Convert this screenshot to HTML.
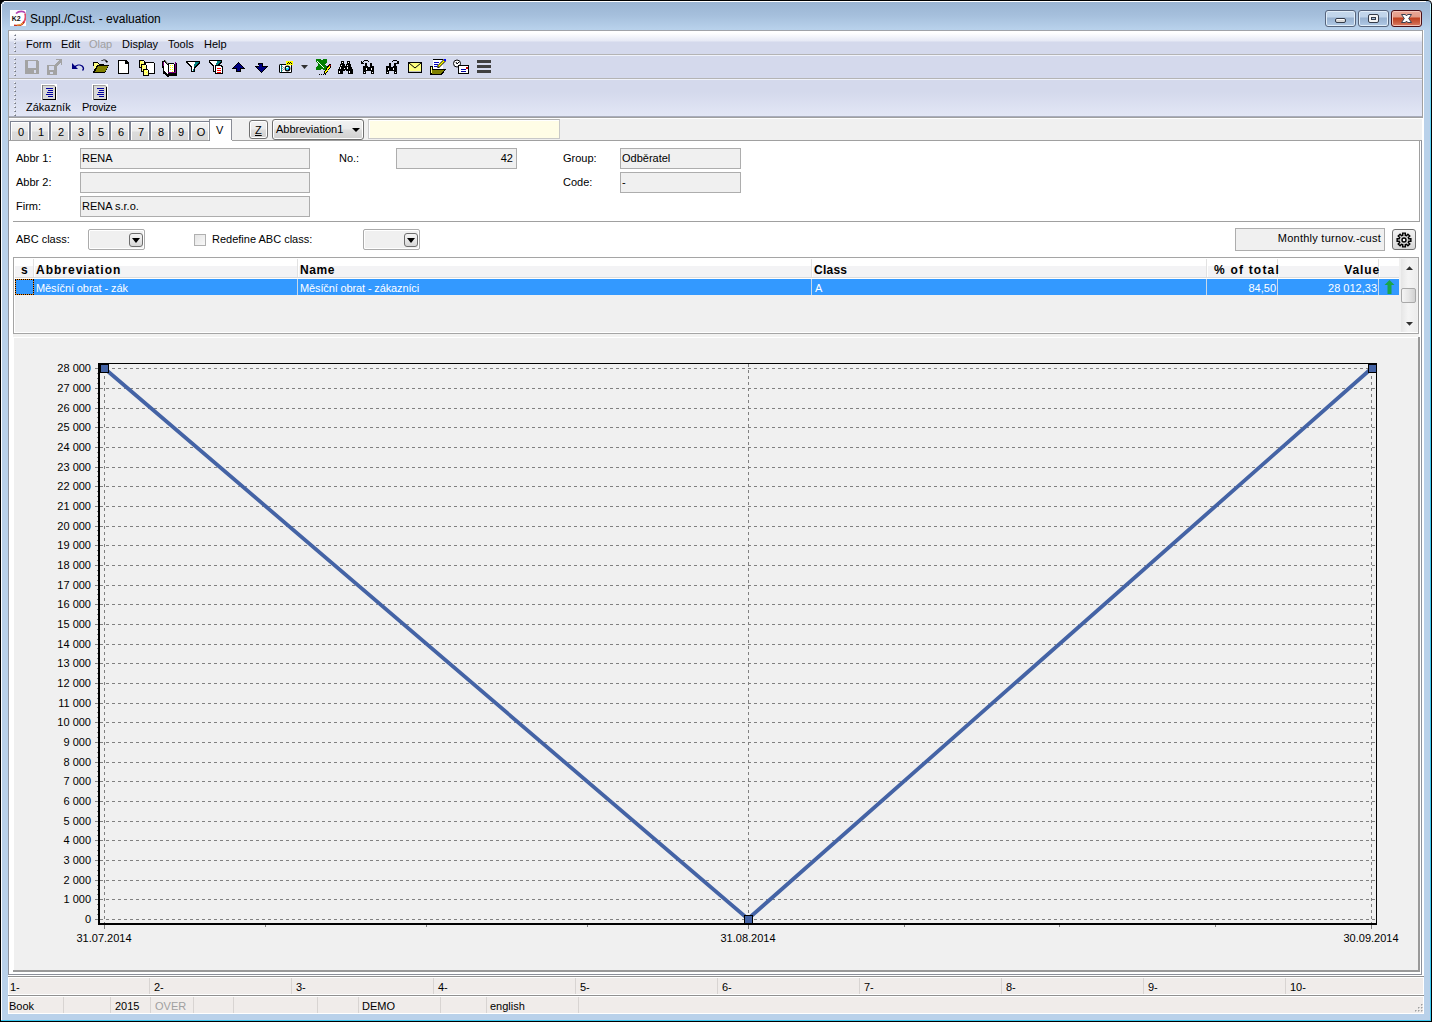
<!DOCTYPE html>
<html><head><meta charset="utf-8">
<style>
*{box-sizing:border-box;margin:0;padding:0}
html,body{width:1432px;height:1022px;overflow:hidden}
body{position:relative;background:#000;font-family:"Liberation Sans",sans-serif;font-size:11px;color:#000;line-height:13px}
.a{position:absolute}
.t{position:absolute;white-space:nowrap;line-height:13px}
</style></head><body>

<!-- window frame -->
<div class="a" style="left:1424px;top:0;width:8px;height:6px;background:#fff"></div>
<div class="a" style="left:0;top:0;width:1432px;height:1022px;border:1px solid #000;border-top-left-radius:6px;border-top-right-radius:4px;background:linear-gradient(#9ab4d2 0,#a5bfdc 14px,#b9d2ec 29px,#b9d1ea 30px)"></div>
<div class="a" style="left:1430px;top:4px;width:1px;height:1017px;background:linear-gradient(#c8f4ff,#90e0f8 20px,#3cc8f0 200px)"></div>
<div class="a" style="left:1px;top:1020px;width:1430px;height:1px;background:#3cc8f0"></div>
<div class="a" style="left:4px;top:1px;width:1422px;height:1px;background:#fff"></div><div class="a" style="left:2px;top:2px;width:2px;height:2px;background:#e8f0f8;border-radius:2px 0 0 0"></div>
<div class="a" style="left:1px;top:4px;width:1px;height:1016px;background:#fcfdff"></div>

<!-- title -->
<div class="t" style="left:30px;top:11px;font-size:12px;line-height:16px;color:#000">Suppl./Cust. - evaluation</div>

<!-- client area -->
<div id="client" class="a" style="left:8px;top:30px;width:1415px;height:984px;background:#f0f0f0;border-left:1px solid #a0a0a0;border-top:1px solid #a0a0a0"></div>

<!-- menubar -->
<div class="a" style="left:9px;top:31px;width:1413px;height:23px;background:linear-gradient(#fff 0,#fff 2px,#e6e9f5 10px,#d4d9ec 11px,#d4d9ec)"></div>
<div class="a" style="left:9px;top:54px;width:1413px;height:1px;background:#b4b4b4"></div>
<div class="a" style="left:8px;top:30px;width:1415px;height:1px;background:#a0a3a8"></div>
<div class="a" style="left:1422px;top:30px;width:1px;height:88px;background:#a0a0a0"></div>
<div class="a" style="left:1423px;top:30px;width:1px;height:984px;background:#fff"></div>
<div class="a" style="left:1422px;top:118px;width:1px;height:896px;background:#fff"></div>

<!-- toolbar 1 -->
<div class="a" style="left:9px;top:55px;width:1413px;height:1px;background:#f0f3fb"></div>
<div class="a" style="left:9px;top:56px;width:1413px;height:22px;background:#d4d9ec"></div>
<div class="a" style="left:9px;top:78px;width:1413px;height:1px;background:#b4b4b4"></div>

<!-- toolbar 2 -->
<div class="a" style="left:9px;top:79px;width:1413px;height:1px;background:#f0f3fb"></div>
<div class="a" style="left:9px;top:80px;width:1413px;height:36px;background:linear-gradient(#d4d9ec 0,#d4d9ec 12px,#e2e6f5 35px)"></div>
<div class="a" style="left:9px;top:116px;width:1413px;height:1px;background:#a8acbb"></div>
<div class="a" style="left:9px;top:117px;width:1413px;height:1px;background:#a0a0a0"></div>
<div class="a" style="left:9px;top:118px;width:1413px;height:1px;background:#fff"></div>


<!-- toolbar icons -->
<svg class="a" style="left:0;top:0" width="520" height="120" viewBox="0 0 520 120" shape-rendering="crispEdges">
<!-- grips -->
<g><rect x="14" y="34" width="1" height="1" fill="#fff"/><rect x="15" y="34" width="1" height="1" fill="#b8bcc8"/><rect x="14" y="35" width="1" height="1" fill="#a0a4b0"/><rect x="15" y="35" width="1" height="1" fill="#70747e"/><rect x="14" y="38" width="1" height="1" fill="#fff"/><rect x="15" y="38" width="1" height="1" fill="#b8bcc8"/><rect x="14" y="39" width="1" height="1" fill="#a0a4b0"/><rect x="15" y="39" width="1" height="1" fill="#70747e"/><rect x="14" y="42" width="1" height="1" fill="#fff"/><rect x="15" y="42" width="1" height="1" fill="#b8bcc8"/><rect x="14" y="43" width="1" height="1" fill="#a0a4b0"/><rect x="15" y="43" width="1" height="1" fill="#70747e"/><rect x="14" y="46" width="1" height="1" fill="#fff"/><rect x="15" y="46" width="1" height="1" fill="#b8bcc8"/><rect x="14" y="47" width="1" height="1" fill="#a0a4b0"/><rect x="15" y="47" width="1" height="1" fill="#70747e"/><rect x="14" y="50" width="1" height="1" fill="#fff"/><rect x="15" y="50" width="1" height="1" fill="#b8bcc8"/><rect x="14" y="51" width="1" height="1" fill="#a0a4b0"/><rect x="15" y="51" width="1" height="1" fill="#70747e"/><rect x="14" y="58" width="1" height="1" fill="#fff"/><rect x="15" y="58" width="1" height="1" fill="#b8bcc8"/><rect x="14" y="59" width="1" height="1" fill="#a0a4b0"/><rect x="15" y="59" width="1" height="1" fill="#70747e"/><rect x="14" y="62" width="1" height="1" fill="#fff"/><rect x="15" y="62" width="1" height="1" fill="#b8bcc8"/><rect x="14" y="63" width="1" height="1" fill="#a0a4b0"/><rect x="15" y="63" width="1" height="1" fill="#70747e"/><rect x="14" y="66" width="1" height="1" fill="#fff"/><rect x="15" y="66" width="1" height="1" fill="#b8bcc8"/><rect x="14" y="67" width="1" height="1" fill="#a0a4b0"/><rect x="15" y="67" width="1" height="1" fill="#70747e"/><rect x="14" y="70" width="1" height="1" fill="#fff"/><rect x="15" y="70" width="1" height="1" fill="#b8bcc8"/><rect x="14" y="71" width="1" height="1" fill="#a0a4b0"/><rect x="15" y="71" width="1" height="1" fill="#70747e"/><rect x="14" y="74" width="1" height="1" fill="#fff"/><rect x="15" y="74" width="1" height="1" fill="#b8bcc8"/><rect x="14" y="75" width="1" height="1" fill="#a0a4b0"/><rect x="15" y="75" width="1" height="1" fill="#70747e"/><rect x="14" y="82" width="1" height="1" fill="#fff"/><rect x="15" y="82" width="1" height="1" fill="#b8bcc8"/><rect x="14" y="83" width="1" height="1" fill="#a0a4b0"/><rect x="15" y="83" width="1" height="1" fill="#70747e"/><rect x="14" y="86" width="1" height="1" fill="#fff"/><rect x="15" y="86" width="1" height="1" fill="#b8bcc8"/><rect x="14" y="87" width="1" height="1" fill="#a0a4b0"/><rect x="15" y="87" width="1" height="1" fill="#70747e"/><rect x="14" y="90" width="1" height="1" fill="#fff"/><rect x="15" y="90" width="1" height="1" fill="#b8bcc8"/><rect x="14" y="91" width="1" height="1" fill="#a0a4b0"/><rect x="15" y="91" width="1" height="1" fill="#70747e"/><rect x="14" y="94" width="1" height="1" fill="#fff"/><rect x="15" y="94" width="1" height="1" fill="#b8bcc8"/><rect x="14" y="95" width="1" height="1" fill="#a0a4b0"/><rect x="15" y="95" width="1" height="1" fill="#70747e"/><rect x="14" y="98" width="1" height="1" fill="#fff"/><rect x="15" y="98" width="1" height="1" fill="#b8bcc8"/><rect x="14" y="99" width="1" height="1" fill="#a0a4b0"/><rect x="15" y="99" width="1" height="1" fill="#70747e"/><rect x="14" y="102" width="1" height="1" fill="#fff"/><rect x="15" y="102" width="1" height="1" fill="#b8bcc8"/><rect x="14" y="103" width="1" height="1" fill="#a0a4b0"/><rect x="15" y="103" width="1" height="1" fill="#70747e"/><rect x="14" y="106" width="1" height="1" fill="#fff"/><rect x="15" y="106" width="1" height="1" fill="#b8bcc8"/><rect x="14" y="107" width="1" height="1" fill="#a0a4b0"/><rect x="15" y="107" width="1" height="1" fill="#70747e"/><rect x="14" y="110" width="1" height="1" fill="#fff"/><rect x="15" y="110" width="1" height="1" fill="#b8bcc8"/><rect x="14" y="111" width="1" height="1" fill="#a0a4b0"/><rect x="15" y="111" width="1" height="1" fill="#70747e"/><rect x="14" y="114" width="1" height="1" fill="#fff"/><rect x="15" y="114" width="1" height="1" fill="#b8bcc8"/><rect x="14" y="115" width="1" height="1" fill="#a0a4b0"/><rect x="15" y="115" width="1" height="1" fill="#70747e"/></g>
<!-- save (disabled) -->
<path d="M25 60h13v1h1v13h-14z" fill="#a3a3a3"/>
<rect x="28" y="61" width="8" height="7" fill="#d4d9ec"/>
<rect x="34" y="70" width="2" height="3" fill="#d4d9ec"/>
<!-- save as (disabled) -->
<path d="M47 65h10v10h-10z" fill="#a3a3a3"/>
<rect x="49" y="66" width="5" height="4" fill="#d4d9ec"/>
<rect x="50" y="72" width="3" height="2" fill="#d4d9ec"/>
<path d="M56 59h6v6h-1v-3l-4 4h-2v-2l4-4h-3z" fill="#a3a3a3"/>
<!-- undo -->
<path d="M72 63v6h6l-2-2c1-2 5-2 6 0c1 1 1 2 0 3l1 1c2-2 1-4 0-5c-2-2-6-2-8 0z" fill="#000080" shape-rendering="auto"/>
<!-- open folder -->
<path d="M93 62h5l1 2h5v2h-11z" fill="#000"/>
<path d="M94 63h4l1 2h4v7h-9z" fill="#ffff80"/>
<path d="M93 72l4-7h12l-4 8h-12z" fill="#000"/>
<path d="M95 72l3-6h10l-3 6z" fill="#808000"/>
<path d="M101 61c2-2 5-2 6 0h1l-1 2l-2-2h1c-1-1-3-1-4 0z" fill="#000" shape-rendering="auto"/>
<!-- new -->
<path d="M118 60h8l3 3v11h-11z" fill="#000"/>
<path d="M119 61h6v3h3v9h-9z" fill="#fff"/>
<!-- copy -->
<path d="M145 62h8l2 2v10h-10z" fill="#000"/><path d="M146 63h7v1h1v9h-8z" fill="#fff"/><rect x="153" y="63" width="1" height="1" fill="#fff"/><path d="M139 60h4l2 2v6h-6z" fill="#000"/><path d="M140 61h3v1h1v5h-4z" fill="#ffff80"/><rect x="143" y="61" width="1" height="1" fill="#fff"/><path d="M141 64h4l2 2v6h-6z" fill="#000"/><path d="M142 65h3v1h1v5h-4z" fill="#ffff80"/><rect x="145" y="65" width="1" height="1" fill="#fff"/><path d="M143 69h4l2 2v5h-6z" fill="#000"/><path d="M144 70h3v1h1v4h-4z" fill="#ffff80"/><rect x="147" y="70" width="1" height="1" fill="#fff"/>
<g fill="#ffff00"><rect x="140" y="61" width="1" height="1"/><rect x="141" y="63" width="1" height="1"/><rect x="142" y="66" width="1" height="1"/><rect x="144" y="70" width="1" height="1"/><rect x="146" y="72" width="1" height="1"/></g>
<!-- book -->
<path d="M162 61h2v-1h1l3 4v-1h6v1h1v-1h2v13h-8v1h-2v-1h-1l-2-2h-1z" fill="#000"/>
<path d="M163 62h1v9l2 2h1v1h1v-1h8v-11h-1v10h-7l-1-1l-3-1z" fill="#800080"/>
<path d="M164 61l4 5v8l-4-3z" fill="#fff"/>
<path d="M165 60l3 4" stroke="#a0a0a0" fill="none" shape-rendering="auto"/>
<path d="M169 64h5v8h-5z" fill="#fff"/>
<g fill="#ffff00"><rect x="170" y="65" width="1" height="1"/><rect x="172" y="65" width="1" height="1"/><rect x="170" y="67" width="1" height="1"/><rect x="172" y="67" width="1" height="1"/><rect x="170" y="69" width="1" height="1"/><rect x="172" y="69" width="1" height="1"/><rect x="172" y="71" width="1" height="1"/></g>
<!-- filter -->
<path d="M186 61h14v2l-5 5v4h-4v-4l-5-5z" fill="#000"/>
<path d="M187 62h12l-5 5v4h-2v-4z" fill="#fff"/>
<path d="M195 62h4l-5 5v4h-1z" fill="#008080"/>
<!-- filter2 -->
<path d="M209 60h13v2l-5 5v5h-4v-5l-4-5z" fill="#000"/>
<path d="M210 61h11l-5 5v5h-2v-5z" fill="#fff"/>
<path d="M217 61h4l-5 5v5h-1z" fill="#008080"/>
<path d="M215 65h6l2 2v7h-8z" fill="#000"/><path d="M216 66h5v1h1v6h-6z" fill="#fff"/>
<rect x="217" y="68" width="4" height="1" fill="#f00"/><rect x="217" y="70" width="4" height="1" fill="#f00"/><rect x="217" y="72" width="4" height="1" fill="#f00"/>
<!-- up -->
<path d="M238 62l7 6v1h-4v3h-5v-3h-4v-1z" fill="#000"/><path d="M238 63l6 5h-4v3h-3v-3h-4z" fill="#000080"/>
<!-- down -->
<path d="M258 63h5v3h5v1l-7 6l-6-6v-1h4z" fill="#000"/><path d="M259 64h3v3h4l-5 5l-5-5h3z" fill="#000080"/>
<!-- camera -->
<rect x="279" y="64" width="13" height="9" rx="1.5" fill="#000" shape-rendering="auto"/>
<rect x="280" y="65" width="11" height="7" fill="#fff"/>
<rect x="281" y="65" width="1" height="7" fill="#008080"/>
<rect x="282" y="66" width="1" height="1" fill="#a0a0a0"/><rect x="283" y="67" width="1" height="1" fill="#a0a0a0"/><rect x="282" y="68" width="1" height="1" fill="#a0a0a0"/><rect x="283" y="69" width="1" height="1" fill="#a0a0a0"/><rect x="282" y="70" width="1" height="1" fill="#a0a0a0"/>
<circle cx="287.5" cy="68.5" r="2.3" fill="#20e0f0" stroke="#000" stroke-width="1.2" shape-rendering="auto"/>
<rect x="286" y="67" width="2" height="1" fill="#fff"/><rect x="288" y="69" width="1" height="1" fill="#0000ff"/>
<rect x="286" y="61" width="7" height="4" fill="#ffff00"/>
<rect x="288" y="62" width="1" height="1" fill="#000"/><rect x="290" y="62" width="1" height="1" fill="#000"/><rect x="289" y="63" width="1" height="1" fill="#000"/><rect x="287" y="63" width="1" height="1" fill="#000"/><rect x="291" y="63" width="1" height="1" fill="#000"/>
<!-- dropdown -->
<path d="M301 65h7l-3.5 4z" fill="#303030" shape-rendering="auto"/>
<!-- excel pencil -->
<path d="M316 59h4l1 1h1l1-1h4v3l-2 2v1l2 2v3h-4l-1-1h-1l-1 1h-4v-3l2-2v-1l-2-2z" fill="#008000"/>
<g fill="#fff"><rect x="317" y="61" width="1" height="1"/><rect x="318" y="62" width="1" height="1"/><rect x="319" y="63" width="1" height="1"/><rect x="320" y="64" width="1" height="1"/><rect x="321" y="65" width="1" height="1"/><rect x="322" y="66" width="1" height="1"/><rect x="323" y="67" width="1" height="1"/></g>
<path d="M329 64h2v3l-5 7l-1 1l-1-1v-2z" fill="#000"/>
<path d="M329 66h1v1l-4 6h-1v-1z" fill="#ffff00"/>
<rect x="329" y="65" width="2" height="1" fill="#c00000"/>
<rect x="319" y="74" width="1" height="1" fill="#000"/><rect x="321" y="74" width="1" height="1" fill="#000"/><rect x="323" y="74" width="1" height="1" fill="#000"/>
<!-- binoculars -->
<g fill="#000">
<rect x="341" y="61" width="3" height="3"/><rect x="347" y="61" width="3" height="3"/>
<rect x="340" y="64" width="5" height="3"/><rect x="346" y="64" width="5" height="3"/>
<rect x="339" y="67" width="6" height="4"/><rect x="346" y="67" width="6" height="4"/>
<rect x="338" y="69" width="5" height="5"/><rect x="348" y="69" width="5" height="5"/>
<rect x="344" y="66" width="3" height="4"/>
</g>
<g fill="#fff">
<rect x="342" y="62" width="1" height="1"/><rect x="348" y="62" width="1" height="1"/>
<rect x="341" y="65" width="1" height="1"/><rect x="347" y="65" width="1" height="1"/>
<rect x="340" y="67" width="1" height="2"/><rect x="347" y="67" width="1" height="2"/><rect x="344" y="68" width="1" height="1"/>
<rect x="339" y="71" width="1" height="2"/><rect x="349" y="71" width="1" height="2"/>
</g>
<g fill="#000">
<rect x="365" y="63" width="2" height="3"/><rect x="370" y="63" width="2" height="3"/>
<path d="M363 66h4l1 1h1l1-1h4v8h-3v-3h-5v3h-3z"/>
<path d="M364 60h4v1h-4zM363 61h1v1h-1zM368 61h1v1h-1zM361 61h1v1h1v1h1v1h-3z"/>
<rect x="389" y="63" width="2" height="3"/><rect x="394" y="63" width="2" height="3"/>
<path d="M386 66h4l1 1h1l1-1h4v8h-3v-3h-5v3h-3z"/>
<path d="M393 60h4v1h-4zM392 61h1v1h-1zM397 61h1v1h-1zM399 61v3h-3v-1h1v-1h1v-1z"/>
</g>
<g fill="#fff">
<rect x="366" y="68" width="1" height="2"/><rect x="371" y="68" width="1" height="2"/><rect x="364" y="72" width="1" height="1"/><rect x="372" y="72" width="1" height="1"/>
<rect x="388" y="68" width="1" height="2"/><rect x="393" y="68" width="1" height="2"/><rect x="387" y="72" width="1" height="1"/><rect x="395" y="72" width="1" height="1"/>
</g>
<!-- envelope -->
<path d="M408 62h14v11h-14z" fill="#000"/>
<rect x="409" y="63" width="12" height="8" fill="#ffff80"/>
<rect x="409" y="71" width="12" height="1" fill="#c0c0c0"/>
<path d="M409 63l6 5l6-5" stroke="#000" fill="none" shape-rendering="auto"/>
<!-- notepad -->
<path d="M433 60h10v9h-10z" fill="#fff"/><path d="M433 59h10v1h-10z" fill="#000"/>
<rect x="434" y="62" width="5" height="1" fill="#0000c0"/><rect x="434" y="64" width="4" height="1" fill="#0000c0"/><rect x="434" y="66" width="3" height="1" fill="#0000c0"/>
<path d="M444 59l2 2l-7 7l-2-0.5l0.5-2z" fill="#000" shape-rendering="auto"/><path d="M444 60l1 1l-6 6l-1-1z" fill="#ffff00" shape-rendering="auto"/>
<rect x="444" y="59" width="2" height="2" fill="#0000ff"/>
<path d="M430 66h3v3h10l3 0l-4 6h-12z" fill="#000"/>
<path d="M432 70h12l-3 4h-9z" fill="#808000"/><rect x="431" y="67" width="1" height="6" fill="#ffff80"/>
<!-- clock mail -->
<circle cx="457" cy="63.5" r="3.5" fill="#fff" stroke="#000" stroke-width="1" shape-rendering="auto"/>
<path d="M456 62l1 2l2-2" stroke="#000" fill="none" shape-rendering="auto"/>
<path d="M458 65h11v9h-11z" fill="#000"/><rect x="459" y="66" width="9" height="7" fill="#fff"/>
<rect x="466" y="67" width="2" height="2" fill="#c00000"/><rect x="461" y="69" width="5" height="1" fill="#0000a0"/><rect x="461" y="71" width="5" height="1" fill="#0000a0"/>
<!-- menu lines -->
<rect x="477" y="60" width="14" height="3" fill="#404040"/><rect x="477" y="65" width="14" height="3" fill="#404040"/><rect x="477" y="70" width="14" height="3" fill="#404040"/>
<!-- toolbar 2 doc icons -->
<g id="docic">
<rect x="41" y="84" width="16" height="16" fill="#fff"/>
<path d="M42 85h12l2 2v13h-14z" fill="#000"/><rect x="42" y="85" width="12" height="1" fill="#a0a0a0"/><path d="M54 85l2 2h-2z" fill="#c0c0c0"/>
<path d="M43 86h11v1h1v12h-12z" fill="#c8c8c8"/>
<path d="M43 86h11v1h1v12h-12z" fill="#e8e8e8" opacity="0.5"/>
<rect x="42" y="85" width="1" height="15" fill="#808080"/>
<rect x="46" y="88" width="7" height="1" fill="#0000a0"/><rect x="48" y="90" width="5" height="1" fill="#0000a0"/><rect x="47" y="92" width="6" height="1" fill="#0000a0"/><rect x="46" y="94" width="7" height="1" fill="#0000a0"/><rect x="48" y="96" width="5" height="1" fill="#0000a0"/>
</g>
<g transform="translate(51 0)">
<rect x="41" y="84" width="16" height="16" fill="#fff"/>
<path d="M42 85h12l2 2v13h-14z" fill="#000"/><rect x="42" y="85" width="12" height="1" fill="#a0a0a0"/><path d="M54 85l2 2h-2z" fill="#c0c0c0"/>
<path d="M43 86h11v1h1v12h-12z" fill="#c8c8c8"/>
<path d="M43 86h11v1h1v12h-12z" fill="#e8e8e8" opacity="0.5"/>
<rect x="42" y="85" width="1" height="15" fill="#808080"/>
<rect x="46" y="88" width="7" height="1" fill="#0000a0"/><rect x="48" y="90" width="5" height="1" fill="#0000a0"/><rect x="47" y="92" width="6" height="1" fill="#0000a0"/><rect x="46" y="94" width="7" height="1" fill="#0000a0"/><rect x="48" y="96" width="5" height="1" fill="#0000a0"/>
</g>
</svg>


<!-- caption buttons -->
<div class="a" style="left:1325px;top:10px;width:31px;height:17px;border:1px solid #56647c;border-radius:3px;background:linear-gradient(#c4d7ec 0,#c0d4ea 6px,#98b2d0 7px,#a3bcda 11px,#b2cbe6 15px);box-shadow:inset 0 0 0 1px #e2eef9"></div>
<div class="a" style="left:1335px;top:18px;width:11px;height:5px;border:1px solid #343c4a;border-radius:2px;background:linear-gradient(#fff,#fff 50%,#d8d8d8 50%)"></div>
<div class="a" style="left:1358px;top:10px;width:31px;height:17px;border:1px solid #56647c;border-radius:3px;background:linear-gradient(#c4d7ec 0,#c0d4ea 6px,#98b2d0 7px,#a3bcda 11px,#b2cbe6 15px);box-shadow:inset 0 0 0 1px #e2eef9"></div>
<div class="a" style="left:1368px;top:14px;width:11px;height:9px;border:1px solid #343c4a;border-radius:2px;background:#f4f4f4"></div>
<div class="a" style="left:1371px;top:17px;width:5px;height:3px;border:1px solid #343c4a;background:#a8c0dc"></div>
<div class="a" style="left:1391px;top:10px;width:31px;height:17px;border:1px solid #4a0e16;border-radius:3px;background:linear-gradient(#eaa898 0,#e39a86 6px,#c0401f 7px,#c85a3e 11px,#dc7e66 15px);box-shadow:inset 0 0 0 1px #f4c4b8"></div>
<svg class="a" style="left:1400px;top:13px" width="13" height="11" viewBox="0 0 13 11"><path d="M1.5 1.5h4l1 1.5l1-1.5h4l-2.8 4l2.8 4h-4l-1-1.5l-1 1.5h-4l2.8-4z" fill="#fff" stroke="#3a4050" stroke-width="1" stroke-linejoin="round"/></svg>
<!-- app icon -->
<svg class="a" style="left:10px;top:10px" width="16" height="16" viewBox="0 0 16 16">
<rect width="16" height="16" fill="#fff"/>
<path d="M6 3.5C9 0.5 14 1 15 3" stroke="#b040b0" stroke-width="1.6" fill="none"/>
<path d="M15 3.5C16 7 15 11 13 13" stroke="#e04a6a" stroke-width="1.8" fill="none"/>
<path d="M14 12C12 15 8 16 4 15.5" stroke="#c83020" stroke-width="2" fill="none"/>
<path d="M13 13C11 15 9 15 7 15" stroke="#f0c040" stroke-width="1" fill="none"/>
<text x="1.8" y="10.6" font-family="Liberation Sans" font-weight="bold" font-size="7" fill="#111" letter-spacing="-0.2">K2</text>
</svg>


<!-- menu texts -->
<div class="t" style="left:26px;top:38px">Form</div>
<div class="t" style="left:61px;top:38px">Edit</div>
<div class="t" style="left:89px;top:38px;color:#a0a0a0">Olap</div>
<div class="t" style="left:122px;top:38px">Display</div>
<div class="t" style="left:168px;top:38px">Tools</div>
<div class="t" style="left:204px;top:38px">Help</div>

<div class="t" style="left:26px;top:101px">Zákazník</div>
<div class="t" style="left:82px;top:101px;letter-spacing:-0.35px">Provize</div>


<style>
.tab{position:absolute;top:121px;width:20px;height:20px;border:1px solid #7d8291;background:linear-gradient(#f3f3f3 0,#ececec 9px,#dcdcdc 10px,#d8d8d8);box-shadow:inset 1px 1px 0 #fff,inset -1px 0 0 #fff}
.tab span{position:absolute;left:2px;right:0;top:4px;text-align:center;line-height:13px}
.fld{position:absolute;height:21px;border:1px solid #adadad;background:#f0f0f0}
.fld span{position:absolute;left:1px;top:3px;line-height:13px;white-space:nowrap}
</style>
<!-- tab strip -->
<div class="tab" style="left:10px"><span>0</span></div>
<div class="tab" style="left:30px"><span>1</span></div>
<div class="tab" style="left:50px"><span>2</span></div>
<div class="tab" style="left:70px"><span>3</span></div>
<div class="tab" style="left:90px"><span>5</span></div>
<div class="tab" style="left:110px"><span>6</span></div>
<div class="tab" style="left:130px"><span>7</span></div>
<div class="tab" style="left:150px"><span>8</span></div>
<div class="tab" style="left:170px"><span>9</span></div>
<div class="tab" style="left:190px"><span>O</span></div>
<div class="a" style="left:209px;top:119px;width:23px;height:22px;border:1px solid #898c95;border-bottom:none;background:#fff"><span class="t" style="left:6px;top:4px">V</span></div>
<div class="a" style="left:249px;top:120px;width:19px;height:19px;border:1px solid #707070;border-radius:3px;background:linear-gradient(#f2f2f2,#ebebeb 45%,#dddddd 55%,#cfcfcf);box-shadow:inset 0 0 0 1px #fff"><span class="t" style="left:5px;top:3px;text-decoration:underline">Z</span></div>
<div class="a" style="left:272px;top:119px;width:92px;height:21px;border:1px solid #707070;border-radius:3px;background:linear-gradient(#f2f2f2,#ebebeb 45%,#dddddd 55%,#cfcfcf);box-shadow:inset 0 0 0 1px #fff"><span class="t" style="left:3px;top:3px">Abbreviation1</span>
<div class="a" style="left:79px;top:8px;width:0;height:0;border-left:4px solid transparent;border-right:4px solid transparent;border-top:4px solid #000"></div></div>
<div class="a" style="left:368px;top:119px;width:192px;height:20px;border:1px solid #c8c8c8;border-top-color:#b0b0b0;background:#fffde6;box-shadow:inset 1px 1px 0 #fff"></div>

<!-- content panel -->
<div class="a" style="left:8px;top:140px;width:1414px;height:835px;border:1px solid #8c909a;border-top-color:#a0a0a0;background:#fff"></div>
<div class="a" style="left:1419px;top:141px;width:1px;height:81px;background:#a0a0a0"></div>
<div class="a" style="left:209px;top:140px;width:23px;height:1px;background:#fff"></div>
<div class="a" style="left:209px;top:140px;width:1px;height:1px;background:#898c95"></div>

<div class="t" style="left:16px;top:152px">Abbr 1:</div>
<div class="t" style="left:16px;top:176px">Abbr 2:</div>
<div class="t" style="left:16px;top:200px">Firm:</div>
<div class="fld" style="left:80px;top:148px;width:230px"><span>RENA</span></div>
<div class="fld" style="left:80px;top:172px;width:230px"></div>
<div class="fld" style="left:80px;top:196px;width:230px"><span>RENA s.r.o.</span></div>
<div class="t" style="left:339px;top:152px">No.:</div>
<div class="fld" style="left:396px;top:148px;width:121px"><span style="left:auto;right:3px">42</span></div>
<div class="t" style="left:563px;top:152px">Group:</div>
<div class="t" style="left:563px;top:176px">Code:</div>
<div class="fld" style="left:620px;top:148px;width:121px"><span>Odběratel</span></div>
<div class="fld" style="left:620px;top:172px;width:121px"><span>-</span></div>

<div class="a" style="left:13px;top:221px;width:1407px;height:1px;background:#a0a0a0"></div>

<div class="t" style="left:16px;top:233px">ABC class:</div>
<div class="a" style="left:88px;top:229px;width:57px;height:21px;border:1px solid #ababab;border-radius:2px;background:#f0f0f0;box-shadow:inset 0 0 0 1px #fff">
 <div class="a" style="left:40px;top:3px;width:14px;height:14px;border:1px solid #6e6e6e;border-radius:3px;background:linear-gradient(#f4f4f4,#e8e8e8 50%,#d6d6d6)"><div class="a" style="left:2px;top:4px;width:0;height:0;border-left:4px solid transparent;border-right:4px solid transparent;border-top:5px solid #000"></div></div>
</div>
<div class="a" style="left:194px;top:234px;width:12px;height:12px;border:1px solid #b0b0b0;background:linear-gradient(135deg,#e4e4e4,#f8f8f8)"></div>
<div class="t" style="left:212px;top:233px">Redefine ABC class:</div>
<div class="a" style="left:363px;top:229px;width:57px;height:21px;border:1px solid #ababab;border-radius:2px;background:#f0f0f0;box-shadow:inset 0 0 0 1px #fff">
 <div class="a" style="left:40px;top:3px;width:14px;height:14px;border:1px solid #6e6e6e;border-radius:3px;background:linear-gradient(#f4f4f4,#e8e8e8 50%,#d6d6d6)"><div class="a" style="left:2px;top:4px;width:0;height:0;border-left:4px solid transparent;border-right:4px solid transparent;border-top:5px solid #000"></div></div>
</div>
<div class="fld" style="left:1235px;top:228px;width:150px;height:23px"><span style="left:auto;right:3px;top:3px;letter-spacing:0.25px">Monthly turnov.-cust</span></div>
<div class="a" style="left:1392px;top:229px;width:24px;height:21px;border:1px solid #707070;border-radius:3px;background:linear-gradient(#f2f2f2,#e6e6e6 50%,#d8d8d8)"></div>


<!-- table -->
<div class="a" style="left:13px;top:257px;width:1406px;height:77px;border:1px solid #a5a5a5;background:#f0f0f0"></div>
<div class="a" style="left:14px;top:258px;width:1385px;height:1px;background:#fff"></div>
<div class="a" style="left:14px;top:258px;width:1px;height:75px;background:#fff"></div>
<div class="a" style="left:14px;top:332px;width:1404px;height:1px;background:#fff"></div>
<div class="a" style="left:15px;top:259px;width:1384px;height:18px;background:linear-gradient(#fff 0,#fff 7px,#f3f3f5 7px,#f3f3f5)"></div>
<div class="a" style="left:15px;top:277px;width:1384px;height:1px;background:#dcdcdc"></div>
<div class="a" style="left:15px;top:278px;width:1384px;height:1px;background:#fff"></div>
<div class="a" style="left:15px;top:279px;width:1384px;height:16px;background:#3399ff"></div>
<div class="a" style="left:15px;top:279px;width:19px;height:16px;border:1px solid #f08a1c"></div><div class="a" style="left:15px;top:279px;width:19px;height:16px;border:1px dotted #000"></div>
<div class="a" style="left:33px;top:259px;width:1px;height:18px;background:#e2e2e2"></div><div class="a" style="left:34px;top:259px;width:1px;height:18px;background:#fff"></div>
<div class="a" style="left:297px;top:259px;width:1px;height:18px;background:#e2e2e2"></div><div class="a" style="left:298px;top:259px;width:1px;height:18px;background:#fff"></div>
<div class="a" style="left:297px;top:279px;width:1px;height:16px;background:#c8d8e8"></div>
<div class="a" style="left:811px;top:259px;width:1px;height:18px;background:#e2e2e2"></div><div class="a" style="left:812px;top:259px;width:1px;height:18px;background:#fff"></div>
<div class="a" style="left:811px;top:279px;width:1px;height:16px;background:#c8d8e8"></div>
<div class="a" style="left:1206px;top:259px;width:1px;height:18px;background:#e2e2e2"></div><div class="a" style="left:1207px;top:259px;width:1px;height:18px;background:#fff"></div>
<div class="a" style="left:1206px;top:279px;width:1px;height:16px;background:#c8d8e8"></div>
<div class="a" style="left:1277px;top:259px;width:1px;height:18px;background:#e2e2e2"></div><div class="a" style="left:1278px;top:259px;width:1px;height:18px;background:#fff"></div>
<div class="a" style="left:1277px;top:279px;width:1px;height:16px;background:#c8d8e8"></div>
<div class="a" style="left:1378px;top:259px;width:1px;height:18px;background:#e2e2e2"></div><div class="a" style="left:1379px;top:259px;width:1px;height:18px;background:#fff"></div>
<div class="a" style="left:1378px;top:279px;width:1px;height:16px;background:#c8d8e8"></div>

<style>.th{position:absolute;top:263px;font-weight:bold;font-size:12px;line-height:14px;white-space:nowrap}
.td{position:absolute;top:282px;color:#fff;line-height:13px;white-space:nowrap}</style>
<div class="th" style="left:21px">s</div>
<div class="th" style="left:36px;letter-spacing:1.0px">Abbreviation</div>
<div class="th" style="left:300px;letter-spacing:0.6px">Name</div>
<div class="th" style="left:814px;letter-spacing:0.25px">Class</div>
<div class="th" style="right:152px;letter-spacing:1.2px;">% of total</div>
<div class="th" style="right:52px;letter-spacing:0.9px">Value</div>
<div class="td" style="left:36px;letter-spacing:-0.09px">Měsíční obrat - zák</div>
<div class="td" style="left:300px;letter-spacing:-0.13px">Měsíční obrat - zákazníci</div>
<div class="td" style="left:815px">A</div>
<div class="td" style="right:156px">84,50</div>
<div class="td" style="right:55px">28 012,33</div>
<svg class="a" style="left:1384px;top:280px" width="11" height="14" viewBox="0 0 11 14"><path d="M5.5 0 L10.5 5 L7.5 5 L7.5 14 L3.5 14 L3.5 5 L0.5 5 Z" fill="#1aa64a"/></svg>
<!-- scrollbar -->
<div class="a" style="left:1399px;top:258px;width:19px;height:74px;background:#f0f0f0"></div><div class="a" style="left:1401px;top:259px;width:16px;height:73px;background:linear-gradient(90deg,#e6e6e6,#f4f4f4 45%,#ececec)"></div>
<svg class="a" style="left:1405px;top:265px" width="9" height="6" viewBox="0 0 9 6"><path d="M1 5L4.5 1.2L8 5z" fill="#303030"/></svg>
<svg class="a" style="left:1405px;top:321px" width="9" height="6" viewBox="0 0 9 6"><path d="M1 1L4.5 4.8L8 1z" fill="#303030"/></svg>
<div class="a" style="left:1401px;top:288px;width:15px;height:15px;border:1px solid #a8a8a8;border-radius:2px;background:linear-gradient(90deg,#f4f4f4,#e6e6e6 50%,#d0d0d0)"></div>


<!-- chart panel -->
<div class="a" style="left:13px;top:334px;width:1406px;height:3px;background:#f2f2f1"></div>
<div class="a" style="left:13px;top:337px;width:1407px;height:635px;background:#f0f0f0;border-top:1px solid #fff;border-left:1px solid #fff"></div>
<div class="a" style="left:1418px;top:337px;width:2px;height:635px;background:#999"></div>
<div class="a" style="left:13px;top:970px;width:1407px;height:2px;background:#999"></div>
<svg class="a" style="left:0;top:0" width="1432" height="1022" viewBox="0 0 1432 1022">
<line x1="100" y1="368.5" x2="1376" y2="368.5" stroke="#808080" stroke-width="1" stroke-dasharray="3 3"/>
<line x1="95" y1="368.5" x2="98" y2="368.5" stroke="#808080" stroke-width="1"/>
<line x1="100" y1="388.5" x2="1376" y2="388.5" stroke="#808080" stroke-width="1" stroke-dasharray="3 3"/>
<line x1="95" y1="388.5" x2="98" y2="388.5" stroke="#808080" stroke-width="1"/>
<line x1="100" y1="408.5" x2="1376" y2="408.5" stroke="#808080" stroke-width="1" stroke-dasharray="3 3"/>
<line x1="95" y1="408.5" x2="98" y2="408.5" stroke="#808080" stroke-width="1"/>
<line x1="100" y1="427.5" x2="1376" y2="427.5" stroke="#808080" stroke-width="1" stroke-dasharray="3 3"/>
<line x1="95" y1="427.5" x2="98" y2="427.5" stroke="#808080" stroke-width="1"/>
<line x1="100" y1="447.5" x2="1376" y2="447.5" stroke="#808080" stroke-width="1" stroke-dasharray="3 3"/>
<line x1="95" y1="447.5" x2="98" y2="447.5" stroke="#808080" stroke-width="1"/>
<line x1="100" y1="467.5" x2="1376" y2="467.5" stroke="#808080" stroke-width="1" stroke-dasharray="3 3"/>
<line x1="95" y1="467.5" x2="98" y2="467.5" stroke="#808080" stroke-width="1"/>
<line x1="100" y1="486.5" x2="1376" y2="486.5" stroke="#808080" stroke-width="1" stroke-dasharray="3 3"/>
<line x1="95" y1="486.5" x2="98" y2="486.5" stroke="#808080" stroke-width="1"/>
<line x1="100" y1="506.5" x2="1376" y2="506.5" stroke="#808080" stroke-width="1" stroke-dasharray="3 3"/>
<line x1="95" y1="506.5" x2="98" y2="506.5" stroke="#808080" stroke-width="1"/>
<line x1="100" y1="526.5" x2="1376" y2="526.5" stroke="#808080" stroke-width="1" stroke-dasharray="3 3"/>
<line x1="95" y1="526.5" x2="98" y2="526.5" stroke="#808080" stroke-width="1"/>
<line x1="100" y1="545.5" x2="1376" y2="545.5" stroke="#808080" stroke-width="1" stroke-dasharray="3 3"/>
<line x1="95" y1="545.5" x2="98" y2="545.5" stroke="#808080" stroke-width="1"/>
<line x1="100" y1="565.5" x2="1376" y2="565.5" stroke="#808080" stroke-width="1" stroke-dasharray="3 3"/>
<line x1="95" y1="565.5" x2="98" y2="565.5" stroke="#808080" stroke-width="1"/>
<line x1="100" y1="585.5" x2="1376" y2="585.5" stroke="#808080" stroke-width="1" stroke-dasharray="3 3"/>
<line x1="95" y1="585.5" x2="98" y2="585.5" stroke="#808080" stroke-width="1"/>
<line x1="100" y1="604.5" x2="1376" y2="604.5" stroke="#808080" stroke-width="1" stroke-dasharray="3 3"/>
<line x1="95" y1="604.5" x2="98" y2="604.5" stroke="#808080" stroke-width="1"/>
<line x1="100" y1="624.5" x2="1376" y2="624.5" stroke="#808080" stroke-width="1" stroke-dasharray="3 3"/>
<line x1="95" y1="624.5" x2="98" y2="624.5" stroke="#808080" stroke-width="1"/>
<line x1="100" y1="644.5" x2="1376" y2="644.5" stroke="#808080" stroke-width="1" stroke-dasharray="3 3"/>
<line x1="95" y1="644.5" x2="98" y2="644.5" stroke="#808080" stroke-width="1"/>
<line x1="100" y1="663.5" x2="1376" y2="663.5" stroke="#808080" stroke-width="1" stroke-dasharray="3 3"/>
<line x1="95" y1="663.5" x2="98" y2="663.5" stroke="#808080" stroke-width="1"/>
<line x1="100" y1="683.5" x2="1376" y2="683.5" stroke="#808080" stroke-width="1" stroke-dasharray="3 3"/>
<line x1="95" y1="683.5" x2="98" y2="683.5" stroke="#808080" stroke-width="1"/>
<line x1="100" y1="703.5" x2="1376" y2="703.5" stroke="#808080" stroke-width="1" stroke-dasharray="3 3"/>
<line x1="95" y1="703.5" x2="98" y2="703.5" stroke="#808080" stroke-width="1"/>
<line x1="100" y1="722.5" x2="1376" y2="722.5" stroke="#808080" stroke-width="1" stroke-dasharray="3 3"/>
<line x1="95" y1="722.5" x2="98" y2="722.5" stroke="#808080" stroke-width="1"/>
<line x1="100" y1="742.5" x2="1376" y2="742.5" stroke="#808080" stroke-width="1" stroke-dasharray="3 3"/>
<line x1="95" y1="742.5" x2="98" y2="742.5" stroke="#808080" stroke-width="1"/>
<line x1="100" y1="762.5" x2="1376" y2="762.5" stroke="#808080" stroke-width="1" stroke-dasharray="3 3"/>
<line x1="95" y1="762.5" x2="98" y2="762.5" stroke="#808080" stroke-width="1"/>
<line x1="100" y1="781.5" x2="1376" y2="781.5" stroke="#808080" stroke-width="1" stroke-dasharray="3 3"/>
<line x1="95" y1="781.5" x2="98" y2="781.5" stroke="#808080" stroke-width="1"/>
<line x1="100" y1="801.5" x2="1376" y2="801.5" stroke="#808080" stroke-width="1" stroke-dasharray="3 3"/>
<line x1="95" y1="801.5" x2="98" y2="801.5" stroke="#808080" stroke-width="1"/>
<line x1="100" y1="821.5" x2="1376" y2="821.5" stroke="#808080" stroke-width="1" stroke-dasharray="3 3"/>
<line x1="95" y1="821.5" x2="98" y2="821.5" stroke="#808080" stroke-width="1"/>
<line x1="100" y1="840.5" x2="1376" y2="840.5" stroke="#808080" stroke-width="1" stroke-dasharray="3 3"/>
<line x1="95" y1="840.5" x2="98" y2="840.5" stroke="#808080" stroke-width="1"/>
<line x1="100" y1="860.5" x2="1376" y2="860.5" stroke="#808080" stroke-width="1" stroke-dasharray="3 3"/>
<line x1="95" y1="860.5" x2="98" y2="860.5" stroke="#808080" stroke-width="1"/>
<line x1="100" y1="880.5" x2="1376" y2="880.5" stroke="#808080" stroke-width="1" stroke-dasharray="3 3"/>
<line x1="95" y1="880.5" x2="98" y2="880.5" stroke="#808080" stroke-width="1"/>
<line x1="100" y1="899.5" x2="1376" y2="899.5" stroke="#808080" stroke-width="1" stroke-dasharray="3 3"/>
<line x1="95" y1="899.5" x2="98" y2="899.5" stroke="#808080" stroke-width="1"/>
<line x1="100" y1="919.5" x2="1376" y2="919.5" stroke="#808080" stroke-width="1" stroke-dasharray="3 3"/>
<line x1="95" y1="919.5" x2="98" y2="919.5" stroke="#808080" stroke-width="1"/>
<line x1="104.5" y1="364" x2="104.5" y2="923" stroke="#808080" stroke-width="1" stroke-dasharray="3 3"/>
<line x1="104.5" y1="925" x2="104.5" y2="929" stroke="#808080" stroke-width="1"/>
<line x1="748.5" y1="364" x2="748.5" y2="923" stroke="#808080" stroke-width="1" stroke-dasharray="3 3"/>
<line x1="748.5" y1="925" x2="748.5" y2="929" stroke="#808080" stroke-width="1"/>
<line x1="1371.5" y1="364" x2="1371.5" y2="923" stroke="#808080" stroke-width="1" stroke-dasharray="3 3"/>
<line x1="1371.5" y1="925" x2="1371.5" y2="929" stroke="#808080" stroke-width="1"/>
<line x1="265.5" y1="925" x2="265.5" y2="927" stroke="#808080" stroke-width="1"/>
<line x1="426.5" y1="925" x2="426.5" y2="927" stroke="#808080" stroke-width="1"/>
<line x1="587.5" y1="925" x2="587.5" y2="927" stroke="#808080" stroke-width="1"/>
<line x1="904.5" y1="925" x2="904.5" y2="927" stroke="#808080" stroke-width="1"/>
<line x1="1059.5" y1="925" x2="1059.5" y2="927" stroke="#808080" stroke-width="1"/>
<line x1="1215.5" y1="925" x2="1215.5" y2="927" stroke="#808080" stroke-width="1"/>
<g fill="#808080"><rect x="97" y="373" width="1" height="1"/><rect x="97" y="378" width="1" height="1"/><rect x="97" y="383" width="1" height="1"/><rect x="97" y="393" width="1" height="1"/><rect x="97" y="398" width="1" height="1"/><rect x="97" y="402" width="1" height="1"/><rect x="97" y="412" width="1" height="1"/><rect x="97" y="417" width="1" height="1"/><rect x="97" y="422" width="1" height="1"/><rect x="97" y="432" width="1" height="1"/><rect x="97" y="437" width="1" height="1"/><rect x="97" y="442" width="1" height="1"/><rect x="97" y="452" width="1" height="1"/><rect x="97" y="457" width="1" height="1"/><rect x="97" y="461" width="1" height="1"/><rect x="97" y="471" width="1" height="1"/><rect x="97" y="476" width="1" height="1"/><rect x="97" y="481" width="1" height="1"/><rect x="97" y="491" width="1" height="1"/><rect x="97" y="496" width="1" height="1"/><rect x="97" y="501" width="1" height="1"/><rect x="97" y="511" width="1" height="1"/><rect x="97" y="516" width="1" height="1"/><rect x="97" y="521" width="1" height="1"/><rect x="97" y="530" width="1" height="1"/><rect x="97" y="535" width="1" height="1"/><rect x="97" y="540" width="1" height="1"/><rect x="97" y="550" width="1" height="1"/><rect x="97" y="555" width="1" height="1"/><rect x="97" y="560" width="1" height="1"/><rect x="97" y="570" width="1" height="1"/><rect x="97" y="575" width="1" height="1"/><rect x="97" y="580" width="1" height="1"/><rect x="97" y="589" width="1" height="1"/><rect x="97" y="594" width="1" height="1"/><rect x="97" y="599" width="1" height="1"/><rect x="97" y="609" width="1" height="1"/><rect x="97" y="614" width="1" height="1"/><rect x="97" y="619" width="1" height="1"/><rect x="97" y="629" width="1" height="1"/><rect x="97" y="634" width="1" height="1"/><rect x="97" y="639" width="1" height="1"/><rect x="97" y="648" width="1" height="1"/><rect x="97" y="653" width="1" height="1"/><rect x="97" y="658" width="1" height="1"/><rect x="97" y="668" width="1" height="1"/><rect x="97" y="673" width="1" height="1"/><rect x="97" y="678" width="1" height="1"/><rect x="97" y="688" width="1" height="1"/><rect x="97" y="693" width="1" height="1"/><rect x="97" y="698" width="1" height="1"/><rect x="97" y="707" width="1" height="1"/><rect x="97" y="712" width="1" height="1"/><rect x="97" y="717" width="1" height="1"/><rect x="97" y="727" width="1" height="1"/><rect x="97" y="732" width="1" height="1"/><rect x="97" y="737" width="1" height="1"/><rect x="97" y="747" width="1" height="1"/><rect x="97" y="752" width="1" height="1"/><rect x="97" y="757" width="1" height="1"/><rect x="97" y="766" width="1" height="1"/><rect x="97" y="771" width="1" height="1"/><rect x="97" y="776" width="1" height="1"/><rect x="97" y="786" width="1" height="1"/><rect x="97" y="791" width="1" height="1"/><rect x="97" y="796" width="1" height="1"/><rect x="97" y="806" width="1" height="1"/><rect x="97" y="811" width="1" height="1"/><rect x="97" y="816" width="1" height="1"/><rect x="97" y="826" width="1" height="1"/><rect x="97" y="830" width="1" height="1"/><rect x="97" y="835" width="1" height="1"/><rect x="97" y="845" width="1" height="1"/><rect x="97" y="850" width="1" height="1"/><rect x="97" y="855" width="1" height="1"/><rect x="97" y="865" width="1" height="1"/><rect x="97" y="870" width="1" height="1"/><rect x="97" y="875" width="1" height="1"/><rect x="97" y="885" width="1" height="1"/><rect x="97" y="889" width="1" height="1"/><rect x="97" y="894" width="1" height="1"/><rect x="97" y="904" width="1" height="1"/><rect x="97" y="909" width="1" height="1"/><rect x="97" y="914" width="1" height="1"/></g>
<rect x="98" y="363" width="1" height="562" fill="#000"/>
<rect x="99" y="363" width="1" height="562" fill="#000"/>
<rect x="98" y="923" width="1279" height="2" fill="#000"/>
<rect x="98" y="363" width="1279" height="1" fill="#000"/>
<rect x="1376" y="363" width="1" height="562" fill="#000"/>
<polyline points="104,368 748,919 1372,368" fill="none" stroke="#4463a5" stroke-width="3.8" stroke-linejoin="miter"/>
<rect x="100.5" y="364.5" width="8" height="8" fill="#4463a5" stroke="#000" stroke-width="1"/>
<rect x="744.5" y="915.5" width="8" height="8" fill="#4463a5" stroke="#000" stroke-width="1"/>
<rect x="1368.5" y="364.5" width="8" height="8" fill="#4463a5" stroke="#000" stroke-width="1"/>
</svg>
<style>.yl{position:absolute;right:1341px;line-height:13px;white-space:nowrap}.xl{position:absolute;top:932px;line-height:13px;white-space:nowrap;width:80px;text-align:center}</style>
<div class="yl" style="top:362px">28 000</div>
<div class="yl" style="top:382px">27 000</div>
<div class="yl" style="top:402px">26 000</div>
<div class="yl" style="top:421px">25 000</div>
<div class="yl" style="top:441px">24 000</div>
<div class="yl" style="top:461px">23 000</div>
<div class="yl" style="top:480px">22 000</div>
<div class="yl" style="top:500px">21 000</div>
<div class="yl" style="top:520px">20 000</div>
<div class="yl" style="top:539px">19 000</div>
<div class="yl" style="top:559px">18 000</div>
<div class="yl" style="top:579px">17 000</div>
<div class="yl" style="top:598px">16 000</div>
<div class="yl" style="top:618px">15 000</div>
<div class="yl" style="top:638px">14 000</div>
<div class="yl" style="top:657px">13 000</div>
<div class="yl" style="top:677px">12 000</div>
<div class="yl" style="top:697px">11 000</div>
<div class="yl" style="top:716px">10 000</div>
<div class="yl" style="top:736px">9 000</div>
<div class="yl" style="top:756px">8 000</div>
<div class="yl" style="top:775px">7 000</div>
<div class="yl" style="top:795px">6 000</div>
<div class="yl" style="top:815px">5 000</div>
<div class="yl" style="top:834px">4 000</div>
<div class="yl" style="top:854px">3 000</div>
<div class="yl" style="top:874px">2 000</div>
<div class="yl" style="top:893px">1 000</div>
<div class="yl" style="top:913px">0</div>
<div class="xl" style="left:64px">31.07.2014</div><div class="xl" style="left:708px">31.08.2014</div><div class="xl" style="left:1331px">30.09.2014</div>

<!-- status bars -->
<div class="a" style="left:8px;top:975px;width:1416px;height:39px;background:#fff"></div>
<div class="a" style="left:8px;top:976px;width:1416px;height:1px;background:#909090"></div>
<div class="a" style="left:9px;top:978px;width:1414px;height:16px;background:#f0ecea"></div>
<div class="a" style="left:8px;top:995px;width:1416px;height:1px;background:#909090"></div>
<div class="a" style="left:9px;top:997px;width:1414px;height:16px;background:#f0ecea"></div>
<style>.sb{position:absolute;line-height:13px;white-space:nowrap}.sep{position:absolute;width:1px;height:16px;background:#d8d4d2}</style>
<div class="sep" style="left:149px;top:978px"></div>
<div class="sep" style="left:291px;top:978px"></div>
<div class="sep" style="left:433px;top:978px"></div>
<div class="sep" style="left:575px;top:978px"></div>
<div class="sep" style="left:717px;top:978px"></div>
<div class="sep" style="left:859px;top:978px"></div>
<div class="sep" style="left:1001px;top:978px"></div>
<div class="sep" style="left:1143px;top:978px"></div>
<div class="sep" style="left:1285px;top:978px"></div>
<div class="sb" style="left:10px;top:981px">1-</div>
<div class="sb" style="left:154px;top:981px">2-</div>
<div class="sb" style="left:296px;top:981px">3-</div>
<div class="sb" style="left:438px;top:981px">4-</div>
<div class="sb" style="left:580px;top:981px">5-</div>
<div class="sb" style="left:722px;top:981px">6-</div>
<div class="sb" style="left:864px;top:981px">7-</div>
<div class="sb" style="left:1006px;top:981px">8-</div>
<div class="sb" style="left:1148px;top:981px">9-</div>
<div class="sb" style="left:1290px;top:981px">10-</div>
<div class="sep" style="left:63px;top:997px"></div>
<div class="sep" style="left:110px;top:997px"></div>
<div class="sep" style="left:150px;top:997px"></div>
<div class="sep" style="left:193px;top:997px"></div>
<div class="sep" style="left:233px;top:997px"></div>
<div class="sep" style="left:317px;top:997px"></div>
<div class="sep" style="left:358px;top:997px"></div>
<div class="sep" style="left:440px;top:997px"></div>
<div class="sep" style="left:486px;top:997px"></div>
<div class="sep" style="left:578px;top:997px"></div>
<div class="sb" style="left:9px;top:1000px">Book</div>
<div class="sb" style="left:115px;top:1000px">2015</div>
<div class="sb" style="left:155px;top:1000px;color:#a0a0a0">OVER</div>
<div class="sb" style="left:362px;top:1000px">DEMO</div>
<div class="sb" style="left:490px;top:1000px">english</div>

<!-- gear icon -->
<svg class="a" style="left:1395px;top:231px" width="18" height="18" viewBox="0 0 18 18">
<path d="M7.71 4.17 L7.66 2.13 L10.34 2.13 L10.29 4.17 L11.50 4.67 L12.91 3.20 L14.80 5.09 L13.33 6.50 L13.83 7.71 L15.87 7.66 L15.87 10.34 L13.83 10.29 L13.33 11.50 L14.80 12.91 L12.91 14.80 L11.50 13.33 L10.29 13.83 L10.34 15.87 L7.66 15.87 L7.71 13.83 L6.50 13.33 L5.09 14.80 L3.20 12.91 L4.67 11.50 L4.17 10.29 L2.13 10.34 L2.13 7.66 L4.17 7.71 L4.67 6.50 L3.20 5.09 L5.09 3.20 L6.50 4.67 Z" fill="#d4d4d4" stroke="#000" stroke-width="1.4" stroke-linejoin="miter"/>
<circle cx="9" cy="9" r="2" fill="#fff" stroke="#000" stroke-width="1.4"/>
</svg>
<svg class="a" style="left:0;top:0" width="1432" height="1022" viewBox="0 0 1432 1022" shape-rendering="crispEdges" pointer-events="none"><rect x="1421" y="1004" width="1" height="1" fill="#a0a0a0"/><rect x="1422" y="1004" width="1" height="1" fill="#c4c4c4"/><rect x="1421" y="1005" width="1" height="1" fill="#c4c4c4"/><rect x="1418" y="1007" width="1" height="1" fill="#a0a0a0"/><rect x="1419" y="1007" width="1" height="1" fill="#c4c4c4"/><rect x="1418" y="1008" width="1" height="1" fill="#c4c4c4"/><rect x="1421" y="1007" width="1" height="1" fill="#a0a0a0"/><rect x="1422" y="1007" width="1" height="1" fill="#c4c4c4"/><rect x="1421" y="1008" width="1" height="1" fill="#c4c4c4"/><rect x="1415" y="1010" width="1" height="1" fill="#a0a0a0"/><rect x="1416" y="1010" width="1" height="1" fill="#c4c4c4"/><rect x="1415" y="1011" width="1" height="1" fill="#c4c4c4"/><rect x="1418" y="1010" width="1" height="1" fill="#a0a0a0"/><rect x="1419" y="1010" width="1" height="1" fill="#c4c4c4"/><rect x="1418" y="1011" width="1" height="1" fill="#c4c4c4"/><rect x="1421" y="1010" width="1" height="1" fill="#a0a0a0"/><rect x="1422" y="1010" width="1" height="1" fill="#c4c4c4"/><rect x="1421" y="1011" width="1" height="1" fill="#c4c4c4"/></svg>
</body></html>
